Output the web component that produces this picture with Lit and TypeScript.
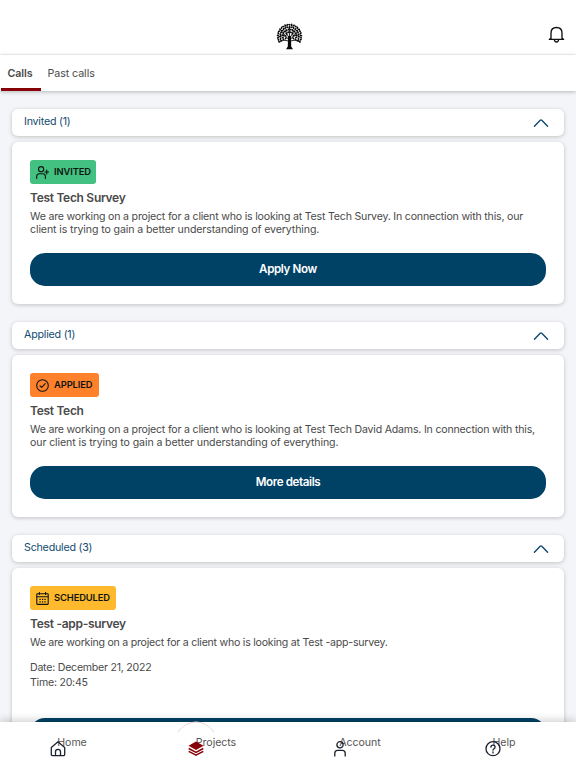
import { LitElement, html, css, svg, nothing } from "lit";
import { customElement, property } from "lit/decorators.js";

const icons: Record<string, unknown> = {
  invited: svg`<circle cx="5.1" cy="3.2" r="2.6"/><path d="M.7 12.5V10.5Q.7 7.7 3.5 7.7H6.6Q9.4 7.7 9.4 10.5V12.5M8.8 6H12.7M10.75 4.1V7.9"/>`,
  applied: svg`<circle cx="6.5" cy="6.5" r="5.8"/><path d="M4 6.8 5.7 8.4 9.2 4.7"/>`,
  scheduled: svg`<rect x=".8" y="1.8" width="11.4" height="10.6" rx=".6"/><path d="M.8 4.7H12.2M3.4.2V2.5M9.6.2V2.5"/><path d="M3.4 7.4H10M3.4 9.9H10" stroke-linecap="butt" stroke-dasharray="1.3 1.2"/>`,
  home: svg`<path d="M1.3 6.4 8 .8 14.7 6.4V13.5Q14.7 14.6 13.6 14.6H2.4Q1.3 14.6 1.3 13.5ZM5.5 14.4V10.8Q5.5 8.4 8 8.4T10.5 10.8V14.4"/>`,
  projects: svg`<path class="solid" d="M8 .6 15.5 4.8 8 9 .5 4.8Z"/><path d="M.7 7.5 8 11.4 15.3 7.5M.7 10.3 8 14.2 15.3 10.3" stroke-width="1.5"/>`,
  account: svg`<circle cx="8" cy="3.8" r="3.1"/><path d="M2.8 15V12.3Q2.8 9.4 5.7 9.4H10.3Q13.2 9.4 13.2 12.3V15"/>`,
  help: svg`<circle cx="8" cy="7.7" r="7"/><path d="M5.9 6.2Q5.9 4.1 8 4.1T10.1 6Q10.1 7 9 7.7T8 9.2M8 10.8V11.9"/>`,
};

@customElement("tree-logo")
class TreeLogo extends LitElement {
  static styles = css`
    :host { display: block; width: 27px; height: 27px; }
    svg { display: block; }
  `;
  render() {
    const leaves = [];
    [[11.6, 23], [9.3, 19], [6.8, 14], [4.2, 8]].forEach(([r, n], ring) => {
      for (let i = 0; i < n; i++) {
        const a = (152 + (236 * i) / (n - 1)) * Math.PI / 180;
        const x = 13.5 + r * Math.cos(a);
        const y = 13.3 + r * Math.sin(a);
        leaves.push(svg`<ellipse cx=${x} cy=${y} rx="1.3" ry=".85"
          transform="rotate(${i * 67 + ring * 40} ${x} ${y})"/>`);
      }
    });
    return html`<svg width="27" height="27" viewBox="0 0 27 27" fill="#080808">
      ${leaves}
      <path d="M12 13H15L15.2 23.5 17 26.3H10L11.8 23.5Z"/>
      <path fill="none" stroke="#080808" stroke-width=".85" d="M13.5 16V5M13.2 17 8.5 12 4 13M13.8 17 18.5 12 23 13M12.5 14 9 7M14.5 14 18 7M12.7 18 7 17 3 19M14.3 18 20 17 24 19M8.5 12 5 8M18.5 12 22 8"/>
    </svg>`;
  }
}

@customElement("call-section")
class CallSection extends LitElement {
  @property() heading = "";
  @property() kind = "";
  @property() name = "";
  @property({ attribute: false }) lines: string[] = [];
  @property({ attribute: false }) details: string[] = [];
  @property() action = "";

  static styles = css`
    :host { display: block; margin-bottom: 18px; }
    .head, .card { background: #fff; border-radius: 6px; box-shadow: 0 1px 4px #00000036; }
    .head {
      height: 27px; box-sizing: border-box; margin-bottom: 6px; padding: 0 15px 0 12px;
      display: flex; justify-content: space-between; color: #144b71;
      font-size: 10.7px; line-height: 25px; letter-spacing: -.22px;
    }
    .chevron { margin-top: 8.5px; width: 16px; height: 10px; fill: none; stroke: #07456e; stroke-width: 1.3; stroke-linecap: round; stroke-linejoin: round; }
    .card { padding: 18px; display: flex; flex-direction: column; color: #4a4a4a; }
    .badge {
      align-self: flex-start; height: 24px; box-sizing: border-box; padding-left: 6px; border-radius: 3px;
      display: flex; align-items: center; gap: 5px; color: #101410;
      font-size: 9.4px; font-weight: 600; letter-spacing: -.12px; white-space: nowrap;
    }
    .badge svg { width: 13px; height: 13px; fill: none; stroke: currentColor; stroke-width: 1.1; stroke-linecap: round; stroke-linejoin: round; }
    .badge span { line-height: 12px; margin-top: -1px; }
    .invited { background: #42c180; width: 66px; }
    .applied { background: #ff812b; width: 68.5px; }
    .scheduled { background: #ffb92c; width: 85.5px; }
    .name { margin-top: 6px; font-size: 12px; font-weight: 600; line-height: 15px; letter-spacing: -.3px; }
    .text { margin-top: 6px; font-size: 10.6px; line-height: 12.5px; white-space: nowrap; letter-spacing: -.11px; }
    .text div:first-child { letter-spacing: -.2px; }
    .text div:only-child { letter-spacing: -.24px; }
    .details { margin-top: 10.5px; font-size: 10.6px; line-height: 15.4px; letter-spacing: -.24px; }
    .action {
      margin-top: 17px; height: 33px; border: 0; border-radius: 15px; padding: 0;
      background: #004266; color: #fff; font: 600 11.6px/33px Inter, sans-serif; letter-spacing: -.38px;
    }
    .details + .action { margin-top: 27px; }
  `;
  render() {
    return html`
      <div class="head"><span>${this.heading}</span>
        <svg class="chevron" viewBox="0 0 16 10"><path d="M1.4 8.3 7.2 2.2Q8 1.5 8.8 2.2L14.6 8.3"/></svg>
      </div>
      <div class="card">
        <div class="badge ${this.kind}"><svg viewBox="0 0 13 13">${icons[this.kind]}</svg><span>${this.kind.toUpperCase()}</span></div>
        <div class="name">${this.name}</div>
        <div class="text">${this.lines.map((l) => html`<div>${l}</div>`)}</div>
        ${this.details.length ? html`<div class="details">${this.details.map((l) => html`<div>${l}</div>`)}</div>` : nothing}
        <button class="action">${this.action}</button>
      </div>`;
  }
}

@customElement("app-root")
class AppRoot extends LitElement {
  static styles = css`
    :host {
      display: flex; flex-direction: column; height: 768px; overflow: hidden;
      background: #f4f5f8; font-family: Inter, "Noto Sans", sans-serif; color: #4a4a4a;
    }
    .top {
      flex: none; height: 55px; box-sizing: border-box; border-bottom: 1px solid #f5f5f5; background: #fff;
      display: grid; grid-template-columns: 1fr 27px 1fr; padding: 23px 11px 0 13px;
    }
    .bell { justify-self: end; margin-top: 3px; width: 17px; height: 18px; fill: none; stroke: #111; stroke-width: 1.35; stroke-linejoin: round; }
    .tabs {
      flex: none; height: 36px; background: #fff; box-shadow: 0 1px 4px #00000040;
      display: flex; font-size: 10.7px; line-height: 37px; position: relative;
    }
    .tab { box-sizing: border-box; height: 36px; padding: 0 7px; letter-spacing: -.08px; }
    .tab.on { width: 40px; margin-left: .5px; font-weight: 600; border-bottom: 3px solid #870008; white-space: nowrap; }
    .list { flex: 1; min-height: 0; overflow: hidden; padding: 18px 12px 0; }
    .nav {
      flex: none; height: 46.5px; background: #fff; box-shadow: 0 -2px 8px #00000030; position: relative;
      display: grid; grid-template-columns: repeat(4, 1fr); justify-items: center;
    }
    .item { position: relative; height: 20px; margin-top: 10px; font-size: 10.6px; line-height: 21px; letter-spacing: -.05px; color: #555; }
    .item svg { position: absolute; left: -7.5px; top: 9.5px; width: 16px; height: 16px; fill: none; stroke: #1c2230; stroke-width: 1.3; stroke-linecap: round; stroke-linejoin: round; }
    .item .ring { left: -22px; top: -10.5px; width: 44px; height: 44px; stroke: #efd6d6; stroke-width: 1; }
    .item.on .icon { stroke: #870008; stroke-linecap: butt; }
    .solid { fill: #870008; stroke: none; }
  `;
  render() {
    const intro = "We are working on a project for a client who is looking at ";
    return html`
      <header class="top">
        <span></span><tree-logo></tree-logo>
        <svg class="bell" viewBox="0 0 17 18"><path d="M3 12.3V7.2Q3 1.5 8.5 1.5T14 7.2V12.3L15.6 13.4H1.4ZM6.4 13.8Q6.6 16 8.5 16T10.6 13.8"/></svg>
      </header>
      <nav class="tabs"><div class="tab on">Calls</div><div class="tab">Past calls</div></nav>
      <main class="list">
        <call-section heading="Invited (1)" kind="invited" name="Test Tech Survey" action="Apply Now"
          .lines=${[intro + "Test Tech Survey. In connection with this, our", "client is trying to gain a better understanding of everything."]}></call-section>
        <call-section heading="Applied (1)" kind="applied" name="Test Tech" action="More details"
          .lines=${[intro + "Test Tech David Adams. In connection with this,", "our client is trying to gain a better understanding of everything."]}></call-section>
        <call-section heading="Scheduled (3)" kind="scheduled" name="Test -app-survey" action=""
          .lines=${[intro + "Test -app-survey."]} .details=${["Date: December 21, 2022", "Time: 20:45"]}></call-section>
      </main>
      <nav class="nav">
        ${["Home", "Projects", "Account", "Help"].map((label) => {
          const on = label === "Projects";
          return html`<div class="item ${on ? "on" : ""}">
            ${on ? html`<svg class="ring" viewBox="0 0 44 44"><path d="M4 11Q11 1 22 1T40 11"/></svg>` : nothing}
            <svg class="icon" viewBox="0 0 16 16">${icons[label.toLowerCase()]}</svg>${label}</div>`;
        })}
      </nav>`;
  }
}
